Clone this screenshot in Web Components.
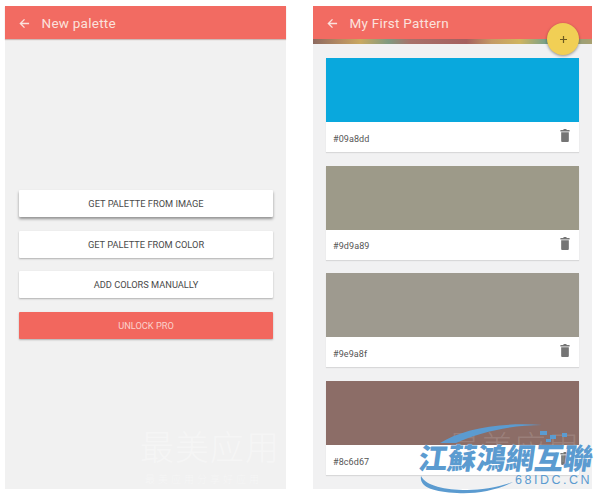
<!DOCTYPE html>
<html>
<head>
<meta charset="utf-8">
<title>Palette</title>
<style>
html, body { margin: 0; padding: 0; background: #fff; }
body { width: 600px; height: 497px; overflow: hidden; position: relative; font-family: Roboto, "Noto Sans", sans-serif; }
.screens { display: flex; gap: 27px; padding: 6px 0 0 5px; }
</style>
</head>
<body>
<div class="screens">
    <new-palette-screen></new-palette-screen>
    <pattern-screen></pattern-screen>
</div>
<site-watermark></site-watermark>

<script>
class AppBar extends HTMLElement {
    constructor() {
        super();
        this.attachShadow({ mode: 'open' });
        this.shadowRoot.innerHTML = `
            <style>
                :host {
                    display: flex;
                    align-items: center;
                    gap: 12px;
                    height: 33px;
                    padding-left: 13.5px;
                    background: #f26b62;
                    color: #fbe2dd;
                    font-size: 13.5px;
                    letter-spacing: 0.25px;
                    box-shadow: 0 1px 1px rgba(120, 60, 50, 0.3);
                    position: relative;
                }
                span { padding-top: 1px; }
                svg { width: 11px; height: 11px; flex: none; margin-top: 1px; }
            </style>
            <svg viewBox="0 0 12 12" fill="none" stroke="#fbe2dd" stroke-width="1.5">
                <path d="M11 6H1.5M6 1.5 1.5 6 6 10.5"/>
            </svg>
            <span><slot></slot></span>
        `;
    }
}

class ActionButton extends HTMLElement {
    constructor() {
        super();
        this.attachShadow({ mode: 'open' });
        this.shadowRoot.innerHTML = `
            <style>
                :host {
                    display: flex;
                    align-items: center;
                    justify-content: center;
                    height: 27px;
                    background: #fff;
                    color: #4a4a4a;
                    font-size: 9.25px;
                    border-radius: 1px;
                    box-shadow: 0 1px 2px rgba(0, 0, 0, 0.28);
                }
                :host([accent]) {
                    background: #f2675e;
                    color: #fbd2cc;
                }
                :host([raised]) {
                    box-shadow: 0 2px 3px rgba(0, 0, 0, 0.4);
                }
            </style>
            <slot></slot>
        `;
    }
}

class NewPaletteScreen extends HTMLElement {
    constructor() {
        super();
        this.attachShadow({ mode: 'open' });
        this.shadowRoot.innerHTML = `
            <style>
                :host {
                    display: flex;
                    flex-direction: column;
                    width: 281px;
                    height: 483px;
                    background: #f1f1f1;
                }
                .actions {
                    display: flex;
                    flex-direction: column;
                    gap: 13.7px;
                    padding: 151px 13px 0 14px;
                }
            </style>
            <app-bar>New palette</app-bar>
            <div class="actions">
                <action-button raised>GET PALETTE FROM IMAGE</action-button>
                <action-button>GET PALETTE FROM COLOR</action-button>
                <action-button>ADD COLORS MANUALLY</action-button>
                <action-button accent>UNLOCK PRO</action-button>
            </div>
        `;
    }
}

class ColorCard extends HTMLElement {
    constructor() {
        super();
        this.attachShadow({ mode: 'open' });
        const hex = this.getAttribute('color');
        this.shadowRoot.innerHTML = `
            <style>
                :host {
                    display: block;
                    background: #fff;
                    box-shadow: 0 1px 1px rgba(0, 0, 0, 0.1);
                }
                .swatch { height: 64px; background: ${hex}; }
                .row {
                    display: flex;
                    align-items: center;
                    justify-content: space-between;
                    height: 30px;
                    padding: 0 9px 0 7px;
                    font-size: 9px;
                    letter-spacing: 0.1px;
                    color: #555;
                }
                span { padding-top: 3px; }
                svg { width: 10px; height: 13px; margin-top: -3px; }
            </style>
            <div class="swatch"></div>
            <div class="row">
                <span>${hex}</span>
                <svg viewBox="0 0 12 14" preserveAspectRatio="none" fill="#757575">
                    <path d="M4.5 0h3l.6 1H11.5v1.6H.5V1h3.4zM1.4 3.4h9.2V12.6c0 .8-.6 1.4-1.4 1.4H2.8c-.8 0-1.4-.6-1.4-1.4z"/>
                </svg>
            </div>
        `;
    }
}

class PatternScreen extends HTMLElement {
    constructor() {
        super();
        this.attachShadow({ mode: 'open' });
        this.shadowRoot.innerHTML = `
            <style>
                :host {
                    display: flex;
                    flex-direction: column;
                    width: 279px;
                    height: 483px;
                    background: #f1f1f2;
                    position: relative;
                    overflow: hidden;
                }
                .stripe {
                    height: 5px;
                    background: linear-gradient(90deg, #8d6a60 0%, #b58c62 10%, #c9a860 17%, #7f9a80 27%, #a8716a 35%, #a5605f 55%, #c49a66 64%, #d0b45f 74%, #74a08c 84%, #a9a070 100%);
                    filter: blur(0.5px);
                }
                .cards {
                    display: flex;
                    flex-direction: column;
                    gap: 13.7px;
                    padding: 14px 13px 0 13px;
                }
                .fab {
                    position: absolute;
                    left: 234px;
                    top: 17px;
                    width: 32px;
                    height: 32px;
                    border-radius: 50%;
                    background: #f1cf55;
                    box-shadow: 0 1px 3px rgba(0, 0, 0, 0.4);
                    display: flex;
                    align-items: center;
                    justify-content: center;
                }
                .fab svg { width: 7px; height: 7px; }
            </style>
            <app-bar>My First Pattern</app-bar>
            <div class="stripe"></div>
            <div class="cards">
                <color-card color="#09a8dd"></color-card>
                <color-card color="#9d9a89"></color-card>
                <color-card color="#9e9a8f"></color-card>
                <color-card color="#8c6d67"></color-card>
            </div>
            <div class="fab">
                <svg viewBox="0 0 7 7" stroke="#6b5a20" stroke-width="1.2"><path d="M3.5 0v7M0 3.5h7"/></svg>
            </div>
        `;
    }
}

class SiteWatermark extends HTMLElement {
    constructor() {
        super();
        this.attachShadow({ mode: 'open' });
        this.shadowRoot.innerHTML = `
            <style>
                :host {
                    display: block;
                    position: absolute;
                    inset: 0;
                    pointer-events: none;
                    font-family: "Noto Sans CJK TC", "Noto Sans CJK SC", sans-serif;
                }
                .faint {
                    position: absolute;
                    color: rgba(255, 255, 255, 0.35);
                    font-family: "Noto Sans CJK SC", sans-serif;
                    font-weight: 300;
                    line-height: 1;
                    white-space: nowrap;
                }
                .faint.one { left: 140px; top: 429px; font-size: 34px; letter-spacing: 1px; }
                .faint.two { left: 145px; top: 474px; font-size: 10px; letter-spacing: 3px; }
                .faint.three { left: 448px; top: 429px; font-size: 32px; letter-spacing: 1px; color: rgba(255, 255, 255, 0.14); }
                .name {
                    position: absolute;
                    left: 419px;
                    top: 440px;
                    font-size: 29px;
                    font-weight: 900;
                    line-height: 1.15;
                    color: #5b9bd0;
                    white-space: nowrap;
                    transform: skewX(-8deg);
                    text-shadow: 0 0 1px #fff;
                }
                .domain {
                    position: absolute;
                    left: 515px;
                    top: 474px;
                    font-family: "Liberation Sans", sans-serif;
                    font-size: 12.5px;
                    line-height: 1;
                    letter-spacing: 2.5px;
                    color: #5b9bd0;
                    white-space: nowrap;
                }
                svg { position: absolute; left: 400px; top: 420px; }
            </style>
            <div class="faint one">最美应用</div>
            <div class="faint two">最美应用分享好应用</div>
            <div class="faint three">最美应用</div>
            <svg width="200" height="77" viewBox="0 0 200 77" fill="#5b9bd0">
                <path d="M40 23C62 9 100 2 142 5 112 5 80 12 56 23z"/>
                <path d="M21 56c5 10 24 14 46 14 14 0 32-3 46-8-18 9-38 12-56 11-24-1-38-6-36-17z"/>
                <rect x="140" y="11" width="7" height="4"/>
                <rect x="150" y="15" width="6" height="4"/>
                <rect x="162" y="13" width="5" height="4"/>
                <rect x="146" y="19" width="5" height="3"/>
            </svg>
            <div class="name">江蘇鴻網互聯</div>
            <div class="domain">68IDC.CN</div>
        `;
    }
}

customElements.define('app-bar', AppBar);
customElements.define('action-button', ActionButton);
customElements.define('new-palette-screen', NewPaletteScreen);
customElements.define('color-card', ColorCard);
customElements.define('pattern-screen', PatternScreen);
customElements.define('site-watermark', SiteWatermark);
</script>
</body>
</html>
